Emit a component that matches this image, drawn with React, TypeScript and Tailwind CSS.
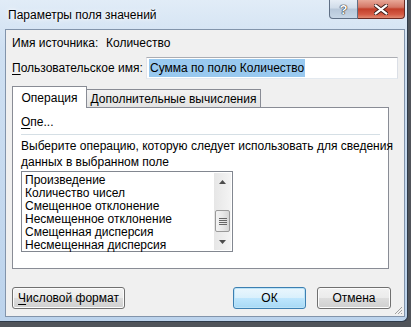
import React from "react";

const items = [
  "Произведение",
  "Количество чисел",
  "Смещенное отклонение",
  "Несмещенное отклонение",
  "Смещенная дисперсия",
  "Несмещенная дисперсия",
];

function WinButton({
  children,
  className = "",
  primary = false,
}: {
  children: React.ReactNode;
  className?: string;
  primary?: boolean;
}) {
  return (
    <div
      className={
        "flex h-[22px] items-center justify-center whitespace-nowrap rounded-[3px] border text-[12px] " +
        (primary
          ? "border-[#3c7fb1] bg-[linear-gradient(#eaf6fd_0%,#d9f0fc_50%,#bee6fd_51%,#a7d9f5_100%)] shadow-[inset_0_0_0_1px_#bce3f7] "
          : "border-[#707070] bg-[linear-gradient(#f2f2f2_0%,#ebebeb_50%,#dddddd_51%,#cfcfcf_100%)] shadow-[inset_0_0_0_1px_#fcfcfc] ") +
        className
      }
    >
      {children}
    </div>
  );
}

function ScrollBar() {
  return (
    <div className="flex w-[17px] flex-col bg-[linear-gradient(90deg,#e6e6e6,#f4f4f4)]">
      <div className="flex h-[17px] items-center justify-center">
        <svg width="7" height="4" viewBox="0 0 7 4">
          <path d="M0 4 L3.5 0 L7 4 Z" fill="#4d4d4d" />
        </svg>
      </div>
      <div className="h-[20px]" />
      <div className="mx-[1px] flex h-[22px] items-center justify-center rounded-[2px] border border-[#9a9a9a] bg-[linear-gradient(90deg,#f3f3f3,#e8e8e8_50%,#d6d6d6)]">
        <svg width="8" height="7" viewBox="0 0 8 7">
          <path d="M0 0.5 H8 M0 2.5 H8 M0 4.5 H8 M0 6.5 H8" stroke="#666" strokeWidth="1" />
        </svg>
      </div>
      <div className="flex-1" />
      <div className="flex h-[17px] items-center justify-center">
        <svg width="7" height="4" viewBox="0 0 7 4">
          <path d="M0 0 L3.5 4 L7 0 Z" fill="#4d4d4d" />
        </svg>
      </div>
    </div>
  );
}

export default function App() {
  return (
    <div className="h-[327px] w-[411px] overflow-hidden whitespace-nowrap bg-[#50545a] font-['Liberation_Sans',Arial,sans-serif] text-[12px] leading-[16px] text-black">
      <div className="flex h-[322px] w-[408px] flex-col rounded-br-[6px] border-b border-r border-[#2f3b4a] bg-[linear-gradient(180deg,#e1ecf7_0%,#cfe0f2_15%,#bcd3ec_100%)]">
        {/* title bar */}
        <div className="flex h-[29px] items-start">
          <div className="pl-[8px] pt-[7px] text-[12px] [text-shadow:0_0_6px_#fff,0_0_3px_#fff]">
            Параметры поля значений
          </div>
          <div className="ml-auto mr-[2px] flex">
            <div className="flex h-[19px] w-[29px] items-center justify-center rounded-bl-[4px] border border-t-0 border-[#5f6f85] bg-[linear-gradient(#e6edf5_0%,#d0dce9_45%,#b7c7d9_50%,#c7d6e6_100%)]">
              <span className="text-[13px] font-bold leading-none text-white [text-shadow:0_0_1px_#222,0_0_1px_#222,0_0_1px_#222]">
                ?
              </span>
            </div>
            <div className="flex h-[19px] w-[47px] items-center justify-center rounded-br-[4px] border border-l-0 border-t-0 border-[#6b2a22] bg-[linear-gradient(#e8a898_0%,#d47766_40%,#c23f2a_50%,#d45a44_80%,#e08a72_100%)]">
              <svg width="14" height="11" viewBox="0 0 14 11">
                <path
                  d="M1 1 L13 10 M13 1 L1 10"
                  stroke="#3a1a16"
                  strokeWidth="4"
                  strokeLinecap="round"
                />
                <path
                  d="M1.5 1.3 L12.5 9.7 M12.5 1.3 L1.5 9.7"
                  stroke="#fff"
                  strokeWidth="2.2"
                  strokeLinecap="round"
                />
              </svg>
            </div>
          </div>
        </div>

        {/* client area */}
        <div className="relative ml-[5px] mr-[2px] flex flex-1 flex-col border border-[#8294ab] bg-[#f0f0f0] px-[6px]">
          <div className="flex pt-[5px]">
            <span className="w-[94px] shrink-0">Имя источника:</span>
            <span>Количество</span>
          </div>

          <div className="mt-[6px] flex items-center">
            <span className="w-[134px] shrink-0">
              <span className="underline underline-offset-2">П</span>ользовательское имя:
            </span>
            <div className="flex h-[22px] flex-1 items-center border border-[#abadb3] border-b-[#e3e9ef] border-l-[#e2e3ea] border-r-[#dbdfe6] bg-white px-[2px]">
              <span className="bg-[#99c9ef] px-[1px] leading-[18px]">Сумма по полю Количество</span>
            </div>
          </div>

          {/* tabs */}
          <div className="mr-[9px] mt-[7px] flex items-end">
            <div className="z-10 -mb-px flex h-[22px] w-[75px] items-center justify-center border border-b-0 border-[#898c95] bg-white">
              Операция
            </div>
            <div className="flex h-[18px] w-[174px] items-center justify-center border border-b-0 border-l-0 border-[#898c95] bg-[linear-gradient(#f2f2f2,#e3e3e3)]">
              Дополнительные вычисления
            </div>
          </div>
          <div className="mr-[9px] flex h-[162px] flex-col border border-[#898c95] bg-white px-[8px] pt-[6px]">
            <div className="flex items-center border-b border-[#d5dfe5] pb-[4px] pr-[2px]">
              <span>
                <span className="underline underline-offset-2">О</span>пе...
              </span>
            </div>
            <div className="mt-[3px]">Выберите операцию, которую следует использовать для сведения</div>
            <div>данных в выбранном поле</div>
            <div className="mt-[1px] flex h-[81px] w-[212px] border border-[#828790] bg-white">
              <div className="flex flex-1 flex-col pl-[3px] pt-[2px]">
                {items.map((t) => (
                  <div key={t} className="h-[13px] leading-[13px]">
                    {t}
                  </div>
                ))}
              </div>
              <div className="py-[1px] pr-[1px]">
                <div className="flex h-full">
                  <ScrollBar />
                </div>
              </div>
            </div>
          </div>

          {/* buttons */}
          <div className="mt-[18px] flex pr-[7px]">
            <WinButton className="w-[113px]">
              <span>
                <span className="underline underline-offset-2">Ч</span>исловой формат
              </span>
            </WinButton>
            <WinButton primary className="ml-auto w-[73px]">
              ОК
            </WinButton>
            <WinButton className="ml-[11px] w-[74px]">Отмена</WinButton>
          </div>

          {/* size grip */}
          <svg
            className="absolute bottom-[1px] right-[1px]"
            width="10"
            height="10"
            viewBox="0 0 10 10"
          >
            <path d="M9 2 L2 9 M9 5 L5 9 M9 8 L8 9" stroke="#a0a0a0" strokeWidth="1" />
          </svg>
        </div>
        <div className="h-[4px]" />
      </div>
    </div>
  );
}
